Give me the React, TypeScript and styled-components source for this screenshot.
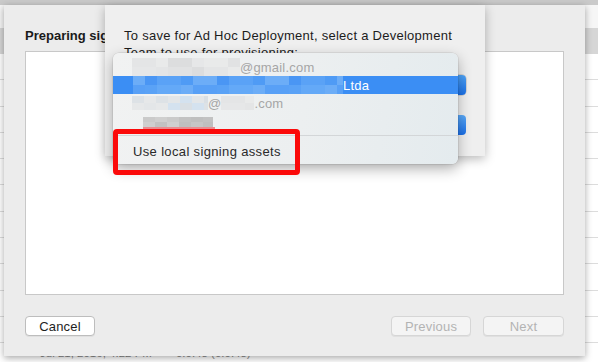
import React from "react";
import styled, { createGlobalStyle } from "styled-components";

const Global = createGlobalStyle`
  html, body {
    margin: 0;
    padding: 0;
  }
  body {
    width: 598px;
    height: 362px;
    overflow: hidden;
    background: #ffffff;
    font-family: "Liberation Sans", Arial, sans-serif;
    -webkit-font-smoothing: antialiased;
  }
`;

const Screen = styled.div`
  position: relative;
  width: 598px;
  height: 362px;
  overflow: hidden;
  background: #ffffff;
`;

/* window behind the sheets */
const Toolbar = styled.div`
  height: 5px;
  background: #cacaca;
`;

const TopGap = styled.div`
  height: 23px;
  background: #f6f6f6;
`;

const HeaderRow = styled.div`
  height: 26px;
  background: #d6d6d6;
`;

const TableRow = styled.div`
  height: 26.3px;
  box-sizing: border-box;
  border-bottom: 1px solid #dcdcdc;
  display: flex;
  align-items: flex-start;
  gap: 24px;
  padding: 4px 0 0 40px;
  font-size: 11.5px;
  color: #8a8a8a;
`;

/* the outer sheet */
const Sheet = styled.div`
  position: absolute;
  left: 4px;
  top: 5px;
  width: 581px;
  height: 351px;
  box-sizing: border-box;
  background: #ececec;
  box-shadow: 0 2px 7px rgba(0, 0, 0, 0.35);
  display: flex;
  flex-direction: column;
  padding: 23px 21px 20px;
`;

const SheetTitle = styled.div`
  height: 16px;
  line-height: 16px;
  font-size: 13px;
  font-weight: bold;
  color: #1a1a1a;
`;

const LogBox = styled.div`
  flex: 1;
  margin-top: 7px;
  background: #ffffff;
  border: 1px solid #c8c8c8;
`;

const ButtonRow = styled.div`
  margin-top: 21px;
  height: 20px;
  display: flex;
  gap: 12px;
`;

const Push = styled.div<{ $w: number; $disabled?: boolean }>`
  width: ${(p) => p.$w}px;
  height: 20px;
  box-sizing: border-box;
  border-radius: 4px;
  border: 1px solid ${(p) => (p.$disabled ? "#d6d6d6" : "#bdbdbd")};
  background: ${(p) => (p.$disabled ? "#f4f4f4" : "#ffffff")};
  color: ${(p) => (p.$disabled ? "#b3b3b3" : "#1e1e1e")};
  font-size: 13px;
  letter-spacing: 0.2px;
  display: flex;
  align-items: center;
  justify-content: center;
  box-shadow: 0 1px 0 rgba(0, 0, 0, 0.05);
`;

const Spacer = styled.div`
  flex: 1;
`;

/* inner dialog */
const Dialog = styled.div`
  position: absolute;
  left: 105px;
  top: 5px;
  width: 380px;
  height: 151px;
  box-sizing: border-box;
  background: #efefef;
  box-shadow: 0 3px 10px rgba(0, 0, 0, 0.28);
  padding: 22px 19px 0;
  display: flex;
  flex-direction: column;
  align-items: flex-end;
`;

const Message = styled.div`
  align-self: stretch;
  font-size: 13px;
  line-height: 17px;
  letter-spacing: 0.27px;
  color: #1c1c1c;
`;

const PopupButton = styled.div`
  margin-top: 14px;
  width: 220px;
  height: 20px;
  display: flex;
  border-radius: 4px;
  overflow: hidden;
  background: #ffffff;
  box-shadow: 0 0 0 0.5px #b8b8b8;
`;

const PopupArrows = styled.div`
  margin-left: auto;
  width: 16px;
  background: linear-gradient(#4ea3f7, #1a70e8);
`;

const DefaultButton = styled.div`
  margin-top: 20px;
  width: 90px;
  height: 20px;
  border-radius: 4px;
  background: linear-gradient(#5aa9f8, #1a6fe8);
`;

/* menu */
const Menu = styled.div`
  position: absolute;
  left: 113px;
  top: 53px;
  width: 345px;
  height: 111px;
  box-sizing: border-box;
  padding: 5px 0 3px;
  border-radius: 6px;
  background: linear-gradient(100deg, #f1f2f2 0%, #eceff0 55%, #e4ebee 100%);
  box-shadow: 0 0 0 0.5px rgba(0, 0, 0, 0.12), 0 5px 14px rgba(0, 0, 0, 0.3);
`;

const MenuItem = styled.div<{ $active?: boolean; $indent?: number }>`
  height: 18px;
  display: flex;
  align-items: center;
  padding-left: ${(p) => 19 + (p.$indent ?? 0)}px;
  font-size: 13px;
  letter-spacing: 0.2px;
  color: ${(p) => (p.$active ? "#ffffff" : "#a6a6a6")};
  background: ${(p) => (p.$active ? "#3b8ef4" : "transparent")};
`;

const Separator = styled.div`
  height: 11px;
  display: flex;
  align-items: center;
  &::after {
    content: "";
    flex: 1;
    height: 1px;
    background: #d3d6d8;
  }
`;

const PlainItem = styled.div`
  height: 20px;
  display: flex;
  align-items: center;
  padding-left: 20px;
  font-size: 13px;
  letter-spacing: 0.35px;
  color: #2a2a2a;
`;

const Misspelled = styled.span`
  display: inline-flex;
  flex-direction: column;
  margin-top: 4px;
`;

const Squiggle = styled.span`
  height: 3px;
  width: 72px;
  background: #e88c90;
`;

const Callout = styled.div`
  position: absolute;
  left: 113px;
  top: 129px;
  width: 187px;
  height: 46px;
  box-sizing: border-box;
  border: 5px solid #fb0a0a;
  border-radius: 4px;
`;

const palettes: Record<string, string[]> = {
  gray: ["#e6e7e8", "#e1e2e3", "#e4e5e6", "#dcddde", "#e9eaea"],
  blue: ["#5aa2f6", "#64a9f7", "#4f9bf5", "#6cadf7", "#58a0f6", "#4a96f4"],
  bluegray: ["#d4e2ef", "#dde2e6", "#e3e6e8", "#d9dfe4", "#e6e8e9"],
  dark: ["#cacaca", "#c2c2c2", "#c6c6c6", "#cfcfcf", "#bfbfbf"],
};

const Mosaic = ({
  width,
  height = 18,
  tone,
  seed = 1,
}: {
  width: number;
  height?: number;
  tone: keyof typeof palettes;
  seed?: number;
}) => {
  const cell = 12;
  const rowH = height / 2;
  const cols = Math.ceil(width / cell);
  const pal = palettes[tone];
  const rects = [];
  for (let r = 0; r < 2; r++) {
    for (let c = 0; c < cols; c++) {
      const i = (c * 7 + r * 13 + seed * 5 + ((c * c + seed) % 3)) % pal.length;
      rects.push(
        <rect key={`${r}-${c}`} x={c * cell} y={r * rowH} width={cell} height={rowH} fill={pal[i]} />
      );
    }
  }
  return (
    <svg width={width} height={height} style={{ display: "block", flex: "none" }}>
      {rects}
    </svg>
  );
};

export default function App() {
  return (
    <Screen>
      <Global />
      <Toolbar />
      <TopGap />
      <HeaderRow />
      {Array.from({ length: 12 }).map((_, i) => (
        <TableRow key={i}>
          {i === 11 && (
            <>
              <span>Jul 21, 2016, 4:22 PM</span>
              <span>0.0.48 (0.0.48)</span>
            </>
          )}
        </TableRow>
      ))}

      <Sheet>
        <SheetTitle>Preparing signing assets</SheetTitle>
        <LogBox />
        <ButtonRow>
          <Push $w={70}>Cancel</Push>
          <Spacer />
          <Push $w={80} $disabled>
            Previous
          </Push>
          <Push $w={81} $disabled>
            Next
          </Push>
        </ButtonRow>
      </Sheet>

      <Dialog>
        <Message>
          To save for Ad Hoc Deployment, select a Development Team to use for provisioning:
        </Message>
        <PopupButton>
          <PopupArrows />
        </PopupButton>
        <DefaultButton />
      </Dialog>

      <Menu>
        <MenuItem>
          <Mosaic width={108} tone="gray" seed={2} />
          <span>@gmail.com</span>
        </MenuItem>
        <MenuItem $active $indent={1}>
          <Mosaic width={210} tone="blue" seed={3} />
          <span>Ltda</span>
        </MenuItem>
        <MenuItem>
          <Mosaic width={76} height={14} tone="bluegray" seed={4} />
          <span>@</span>
          <Mosaic width={33} height={14} tone="gray" seed={5} />
          <span>.com</span>
        </MenuItem>
        <MenuItem $indent={11}>
          <Misspelled>
            <Mosaic width={70} height={10} tone="dark" seed={6} />
            <Squiggle />
          </Misspelled>
        </MenuItem>
        <Separator />
        <PlainItem>Use local signing assets</PlainItem>
      </Menu>

      <Callout />
    </Screen>
  );
}
